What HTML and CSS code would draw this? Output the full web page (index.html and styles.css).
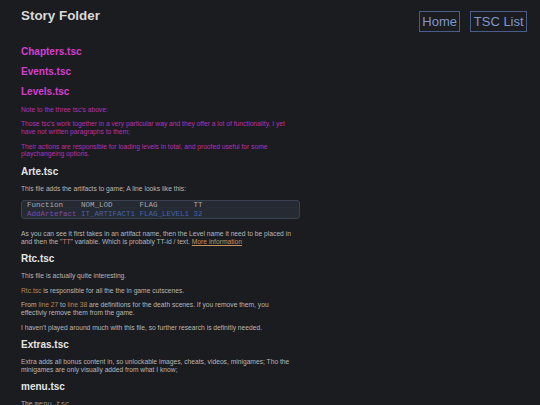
FILE: index.html
```html
<!DOCTYPE html>
<html>
<head>
<meta charset="utf-8">
<title>Story Folder</title>
<link rel="stylesheet" href="styles.css">
</head>
<body>
<header class="top">
  <h1 class="title">Story Folder</h1>
  <nav class="nav">
    <a class="nav-btn" href="#">Home</a>
    <a class="nav-btn" href="#">TSC List</a>
  </nav>
</header>
<main class="content">
  <h3 class="pink-head first">Chapters.tsc</h3>
  <h3 class="pink-head">Events.tsc</h3>
  <h3 class="pink-head">Levels.tsc</h3>
  <p class="pink">Note to the three tsc's above:</p>
  <p class="pink">Those tsc's work together in a very particular way and they offer a lot of functionality, I yet have not written paragraphs to them;</p>
  <p class="pink">Their actions are responsible for loading levels in total, and proofed useful for some playchangeing options.</p>

  <h2 class="head">Arte.tsc</h2>
  <p>This file adds the artifacts to game; A line looks like this:</p>
  <pre class="code"><span class="c-head">Function    NOM_LOD      FLAG        TT</span>
<span class="c-fn">AddArtefact</span> <span class="c-arg">IT_ARTIFACT1 FLAG_LEVEL1 32</span></pre>
  <p>As you can see it first takes in an artifact name, then the Level name it need to be placed in and then the "<span class="tt">TT</span>" variable. Which is probably TT-id / text. <a class="more" href="#">More information</a></p>

  <h2 class="head">Rtc.tsc</h2>
  <p>This file is actually quite interesting.</p>
  <p><span class="hl">Rtc.tsc</span> is responsible for all the the in game cutscenes.</p>
  <p>From <span class="hl">line 27</span> to <span class="hl">line 38</span> are definitions for the death scenes. If you remove them, you effectivly remove them from the game.</p>
  <p>I haven't played around much with this file, so further research is definitly needed.</p>

  <h2 class="head">Extras.tsc</h2>
  <p>Extra adds all bonus content in, so unlockable images, cheats, videos, minigames; Tho the minigames are only visually added from what I know;</p>

  <h2 class="head">menu.tsc</h2>
  <p>The <code class="inline">menu.tsc</code>.</p>
</main>
</body>
</html>
```
FILE: styles.css
```css
html, body {
  margin: 0;
  padding: 0;
  background: #1b1c1f;
}
body {
  font-family: "Liberation Sans", Arial, sans-serif;
  color: #b7b7b7;
}
.top {
  display: flex;
  justify-content: space-between;
  align-items: flex-start;
  padding: 0 13px 0 21px;
}
.title {
  margin: 8.25px 0 0;
  font-size: 13.4px;
  line-height: 15.5px;
  font-weight: bold;
  color: #d9d9d9;
}
.nav {
  display: flex;
  gap: 10px;
  margin-top: 10.7px;
}
.nav-btn {
  display: block;
  border: 1px solid #4a5d89;
  color: #7f97cc;
  font-size: 13px;
  line-height: 19px;
  padding: 0 2.4px;
  text-decoration: none;
}
.content {
  width: 274px;
  padding-left: 21px;
}
.pink-head {
  margin: 0 0 8.5px;
  font-size: 10px;
  line-height: 11.5px;
  font-weight: bold;
  color: #d63dd0;
}
.pink-head.first {
  margin-top: 14px;
}
p {
  margin: 6.7px 0;
  font-size: 6.7px;
  line-height: 7.85px;
}
p.pink {
  color: #b531b2;
}
.head {
  margin: 7.5px 0;
  font-size: 10px;
  line-height: 11.5px;
  font-weight: bold;
  color: #e4e4e4;
}
.code {
  width: 279px;
  box-sizing: border-box;
  margin: 7.5px 0 11px;
  padding: 0 5px;
  background: #262a33;
  border: 1px solid #3b4150;
  border-radius: 3px;
  font-family: "Liberation Mono", "Courier New", monospace;
  font-size: 7.5px;
  line-height: 8.4px;
  white-space: pre;
}
.c-head { color: #a9a9a9; }
.c-fn { color: #7a4ea6; }
.c-arg { color: #4562ad; }
.tt { color: #e07676; }
.hl { color: #b8864f; }
.more {
  color: #c4935f;
  text-decoration: underline;
}
.inline {
  font-family: "Liberation Mono", "Courier New", monospace;
  font-size: 7.3px;
  color: #9a9a9a;
}
```
